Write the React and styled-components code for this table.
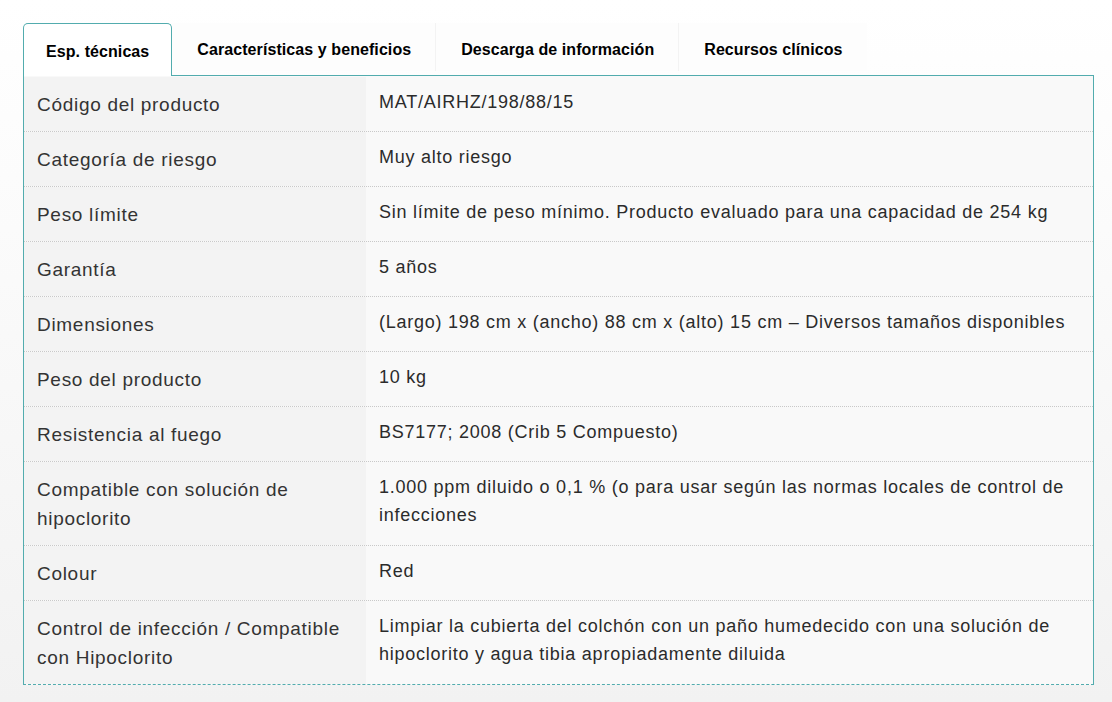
import React from "react";
import styled, { createGlobalStyle } from "styled-components";

const Global = createGlobalStyle`
  html, body { margin: 0; padding: 0; }
  body {
    min-height: 702px;
    background: linear-gradient(to bottom, #ffffff 0%, #fcfcfc 25%, #f2f2f2 100%);
    font-family: "Liberation Sans", Arial, sans-serif;
  }
`;

const TEAL = "#52acae";

const Page = styled.div`
  padding: 23px 0 0 23px;
  width: 1071px;
`;

const TabBar = styled.div`
  display: flex;
  align-items: flex-start;
  height: 53px;
  margin-bottom: -1px;
  position: relative;
  z-index: 1;
`;

const Tab = styled.div`
  display: flex;
  align-items: center;
  box-sizing: border-box;
  font-size: 16px;
  font-weight: bold;
  letter-spacing: 0.08px;
  color: #000;
  white-space: nowrap;
  ${(p) =>
    p.$active
      ? `
    height: 53px;
    padding: 3px 22px 0 22px;
    background: #fff;
    border: 1px solid ${TEAL};
    border-bottom: none;
    border-radius: 5px 5px 0 0;
  `
      : `
    height: 48px;
    padding: 6px 24px 0 25px;
    background: #fdfdfd;
    border-right: 1px solid #f3f3f3;
  `}
  ${(p) => p.$last && `border-right: none;`}
`;

const Panel = styled.div`
  box-sizing: border-box;
  width: 1071px;
  padding-top: 1px;
  border: 1px solid ${TEAL};
  border-bottom: 1px dashed ${TEAL};
  background: #f9f9f9;
`;

const Row = styled.div`
  display: grid;
  grid-template-columns: 342px 1fr;
  border-bottom: 1px dotted #c9c9c9;
  &:last-child { border-bottom: none; }
`;

const Label = styled.div`
  background: #f3f3f3;
  color: #333;
  font-size: 19px;
  letter-spacing: 0.7px;
  line-height: 29px;
  padding: 13px 13px 12px 13px;
`;

const Value = styled.div`
  background: #f9f9f9;
  color: #2b2b2b;
  font-size: 18px;
  letter-spacing: 0.75px;
  line-height: 28px;
  padding: 11px 13px 12px 13px;
`;

const tabs = [
  "Esp. técnicas",
  "Características y beneficios",
  "Descarga de información",
  "Recursos clínicos",
];

const rows = [
  ["Código del producto", "MAT/AIRHZ/198/88/15"],
  ["Categoría de riesgo", "Muy alto riesgo"],
  ["Peso límite", "Sin límite de peso mínimo. Producto evaluado para una capacidad de 254 kg"],
  ["Garantía", "5 años"],
  ["Dimensiones", "(Largo) 198 cm x (ancho) 88 cm x (alto) 15 cm – Diversos tamaños disponibles"],
  ["Peso del producto", "10 kg"],
  ["Resistencia al fuego", "BS7177; 2008 (Crib 5 Compuesto)"],
  [
    "Compatible con solución de hipoclorito",
    "1.000 ppm diluido o 0,1 % (o para usar según las normas locales de control de infecciones",
  ],
  ["Colour", "Red"],
  [
    "Control de infección / Compatible con Hipoclorito",
    "Limpiar la cubierta del colchón con un paño humedecido con una solución de hipoclorito y agua tibia apropiadamente diluida",
  ],
];

export default function App() {
  return (
    <>
      <Global />
      <Page>
        <TabBar>
          {tabs.map((t, i) => (
            <Tab key={t} $active={i === 0} $last={i === tabs.length - 1}>
              {t}
            </Tab>
          ))}
        </TabBar>
        <Panel>
          {rows.map(([l, v]) => (
            <Row key={l}>
              <Label>{l}</Label>
              <Value>{v}</Value>
            </Row>
          ))}
        </Panel>
      </Page>
    </>
  );
}
